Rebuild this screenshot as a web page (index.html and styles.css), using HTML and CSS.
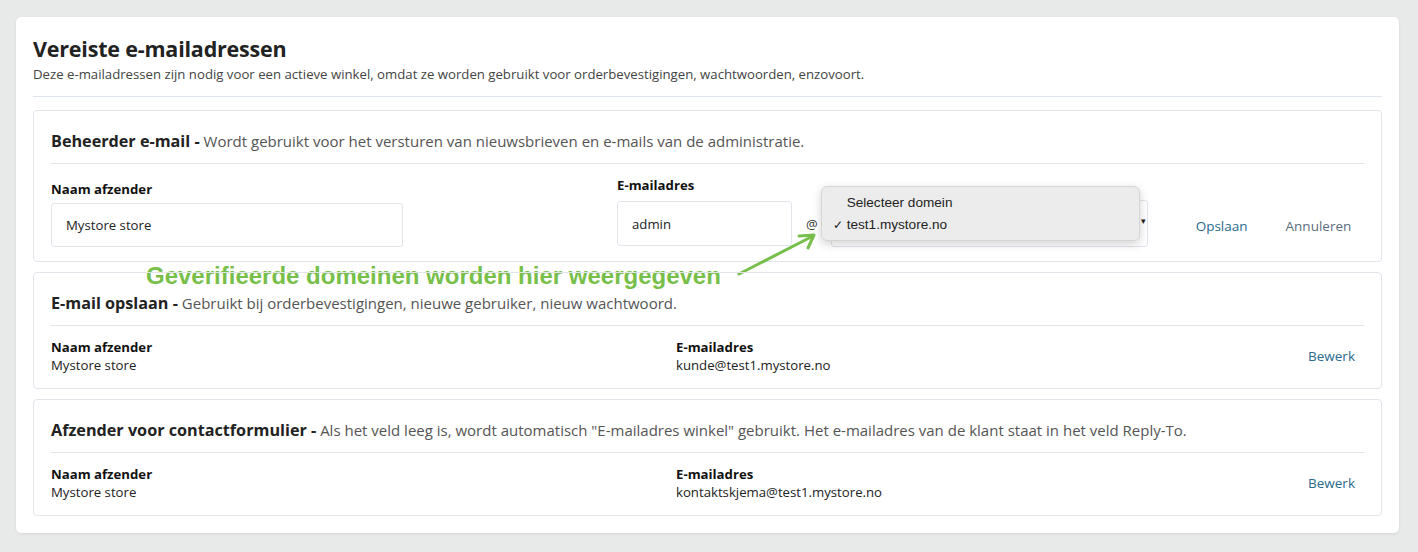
FILE: index.html
```html
<!DOCTYPE html>
<html lang="nl">
<head>
<meta charset="utf-8">
<title>Vereiste e-mailadressen</title>
<link rel="stylesheet" href="styles.css">
</head>
<body>
<div class="card">
  <h1 class="title">Vereiste e-mailadressen</h1>
  <p class="subtitle">Deze e-mailadressen zijn nodig voor een actieve winkel, omdat ze worden gebruikt voor orderbevestigingen, wachtwoorden, enzovoort.</p>
  <div class="rule"></div>

  <div class="section editing">
    <div class="sec-head"><b>Beheerder e-mail -</b> Wordt gebruikt voor het versturen van nieuwsbrieven en e-mails van de administratie.</div>
    <div class="form-row">
      <div class="field name-field">
        <div class="label">Naam afzender</div>
        <div class="input name-input">Mystore store</div>
      </div>
      <div class="field email-field">
        <div class="label label-email">E-mailadres</div>
        <div class="email-line">
          <div class="input email-input">admin</div>
          <span class="at">@</span>
          <div class="select-wrap">
            <div class="select"><span class="caret">&#9662;</span></div>
            <div class="popup">
              <div class="opt"><span class="check"></span>Selecteer domein</div>
              <div class="opt"><span class="check">&#10003;</span>test1.mystore.no</div>
            </div>
          </div>
        </div>
      </div>
      <div class="actions">
        <span class="link">Opslaan</span>
        <span class="link muted">Annuleren</span>
      </div>
    </div>
    <div class="annotation">
      <span class="note">Geverifieerde domeinen worden hier weergegeven</span>
      <svg class="arrow" width="90" height="50" viewBox="0 0 90 50">
        <line x1="4" y1="44" x2="78" y2="6" stroke="#77bf4a" stroke-width="3" stroke-linecap="round"/>
        <polyline points="64,6 79,5 73,18" fill="none" stroke="#77bf4a" stroke-width="3" stroke-linecap="round" stroke-linejoin="round"/>
      </svg>
    </div>
  </div>

  <div class="section">
    <div class="sec-head"><b>E-mail opslaan -</b> Gebruikt bij orderbevestigingen, nieuwe gebruiker, nieuw wachtwoord.</div>
    <div class="info-row">
      <div><div class="label">Naam afzender</div><div class="value">Mystore store</div></div>
      <div><div class="label">E-mailadres</div><div class="value">kunde@test1.mystore.no</div></div>
      <span class="link">Bewerk</span>
    </div>
  </div>

  <div class="section">
    <div class="sec-head"><b>Afzender voor contactformulier -</b> Als het veld leeg is, wordt automatisch "E-mailadres winkel" gebruikt. Het e-mailadres van de klant staat in het veld Reply-To.</div>
    <div class="info-row">
      <div><div class="label">Naam afzender</div><div class="value">Mystore store</div></div>
      <div><div class="label">E-mailadres</div><div class="value">kontaktskjema@test1.mystore.no</div></div>
      <span class="link">Bewerk</span>
    </div>
  </div>
</div>
</body>
</html>
```

FILE: styles.css
```css
* { box-sizing: border-box; }
html, body { margin: 0; padding: 0; }
body {
  background: #e8e9e9;
  font-family: "Open Sans", "Noto Sans", sans-serif;
  color: #222;
  padding: 17px 19px 19px 16px;
}
.card {
  width: 1383px;
  height: 516px;
  background: #fff;
  border-radius: 5px;
  box-shadow: 0 1px 3px rgba(0,0,0,0.08);
  padding: 19px 17px 0 17px;
}
.title {
  margin: 0;
  font-size: 21.5px;
  font-weight: 700;
  line-height: 26px;
  color: #222;
  letter-spacing: -0.2px;
}
.subtitle {
  margin: 3px 0 0 0;
  font-size: 13.2px;
  line-height: 18px;
  color: #444;
}
.rule {
  height: 1px;
  background: #dfe5ec;
  margin-top: 13px;
  margin-bottom: 13px;
}
.section {
  border: 1px solid #e1e5eb;
  border-radius: 4px;
  padding: 0 17px;
  margin-bottom: 10px;
  position: relative;
}
.sec-head {
  font-size: 15px;
  color: #555;
  line-height: 20px;
  padding: 20px 0 12px 0;
  border-bottom: 1px solid #e1e5eb;
  white-space: nowrap;
}
.sec-head b {
  font-size: 16.2px;
  color: #222;
  font-weight: 700;
}
.label {
  font-size: 13.2px;
  font-weight: 700;
  line-height: 18px;
  color: #111;
}
.value {
  font-size: 13.2px;
  line-height: 18px;
  color: #222;
}
.form-row {
  display: flex;
  align-items: flex-start;
  padding: 15px 0 14px 0;
  height: 97px;
}
.name-field { width: 566px; padding-top: 1px; }
.input {
  border: 1px solid #e1e5eb;
  border-radius: 3px;
  font-size: 13.2px;
  color: #222;
  display: flex;
  align-items: center;
  padding-left: 14px;
}
.name-input { width: 352px; height: 44px; margin-top: 5px; }
.label-email { margin-top: -3px; }
.email-line { display: flex; align-items: center; margin-top: 6px; }
.email-input { width: 175px; height: 45px; }
.at { font-size: 13px; color: #333; margin: 0 6px 0 14px; }
.select-wrap { position: relative; width: 317px; height: 47px; margin-left: 7px; }
.select {
  width: 100%;
  height: 100%;
  border: 1px solid #e1e5eb;
  border-radius: 3px;
  position: relative;
}
.caret { position: absolute; right: 1px; top: 13px; font-size: 9px; color: #222; }
.popup {
  position: absolute;
  left: -10px;
  top: -14px;
  width: 319px;
  height: 55px;
  background: #ececec;
  border: 1px solid #d6d6d6;
  border-radius: 6px;
  box-shadow: 0 3px 10px rgba(0,0,0,0.18);
  padding-top: 5px;
  font-family: "Liberation Sans", Arial, sans-serif;
  font-size: 13.6px;
  color: #222;
}
.opt { height: 22px; line-height: 22px; display: flex; }
.check { width: 25px; text-align: right; padding-right: 4px; font-size: 12px; }
.actions {
  display: flex;
  gap: 38px;
  margin-left: 48px;
  margin-top: 38px;
}
.link { font-size: 13.5px; color: #2a6a8c; }
.link.muted { color: #5b6d7c; }
.annotation {
  position: absolute;
  left: 112px;
  top: 150px;
  width: 800px;
  height: 60px;
}
.note {
  position: absolute;
  left: 0;
  top: 1px;
  font-family: "Liberation Sans", Arial, sans-serif;
  font-weight: 700;
  font-size: 24px;
  color: #77bf4a;
  white-space: nowrap;
}
.arrow { position: absolute; left: 589px; top: -31px; }
.info-row {
  display: grid;
  grid-template-columns: 625px 1fr auto;
  align-items: center;
  padding: 12px 9px 14px 0;
}
```
